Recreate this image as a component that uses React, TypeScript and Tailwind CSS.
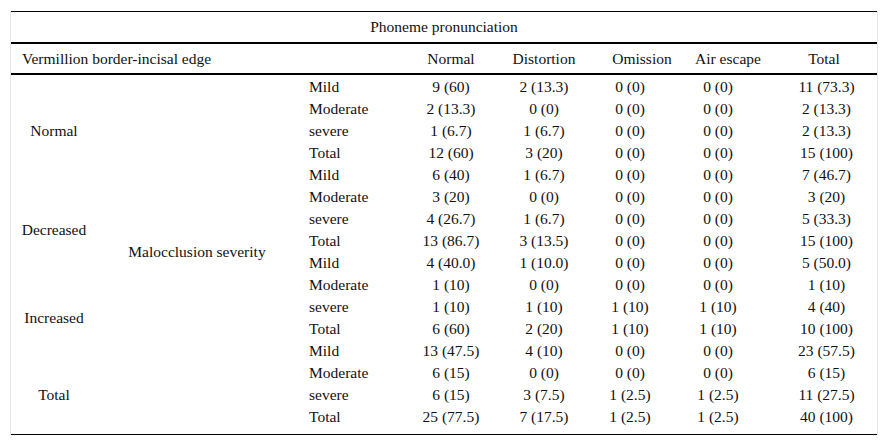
import React from 'react';

const rows: [string, string, string, string, string, string][] = [
  ['Mild', '9 (60)', '2 (13.3)', '0 (0)', '0 (0)', '11 (73.3)'],
  ['Moderate', '2 (13.3)', '0 (0)', '0 (0)', '0 (0)', '2 (13.3)'],
  ['severe', '1 (6.7)', '1 (6.7)', '0 (0)', '0 (0)', '2 (13.3)'],
  ['Total', '12 (60)', '3 (20)', '0 (0)', '0 (0)', '15 (100)'],
  ['Mild', '6 (40)', '1 (6.7)', '0 (0)', '0 (0)', '7 (46.7)'],
  ['Moderate', '3 (20)', '0 (0)', '0 (0)', '0 (0)', '3 (20)'],
  ['severe', '4 (26.7)', '1 (6.7)', '0 (0)', '0 (0)', '5 (33.3)'],
  ['Total', '13 (86.7)', '3 (13.5)', '0 (0)', '0 (0)', '15 (100)'],
  ['Mild', '4 (40.0)', '1 (10.0)', '0 (0)', '0 (0)', '5 (50.0)'],
  ['Moderate', '1 (10)', '0 (0)', '0 (0)', '0 (0)', '1 (10)'],
  ['severe', '1 (10)', '1 (10)', '1 (10)', '1 (10)', '4 (40)'],
  ['Total', '6 (60)', '2 (20)', '1 (10)', '1 (10)', '10 (100)'],
  ['Mild', '13 (47.5)', '4 (10)', '0 (0)', '0 (0)', '23 (57.5)'],
  ['Moderate', '6 (15)', '0 (0)', '0 (0)', '0 (0)', '6 (15)'],
  ['severe', '6 (15)', '3 (7.5)', '1 (2.5)', '1 (2.5)', '11 (27.5)'],
  ['Total', '25 (77.5)', '7 (17.5)', '1 (2.5)', '1 (2.5)', '40 (100)'],
];

export default function App() {
  return (
    <div className="w-[889px] h-[445px] bg-white text-[15.5px] text-[#111] font-[Liberation_Serif]">
      <div className="ml-[10px] pt-[11px] w-[868px]">
        <div className="border-x border-[#e6e6e6]">
          <div className="border-t border-black h-[31px] flex items-center justify-center">
            Phoneme pronunciation
          </div>
          <div className="border-t-2 border-black h-[31px] flex items-center">
            <div className="w-[389px] pl-[11px]">Vermillion border-incisal edge</div>
            <div className="w-[102px] text-center">Normal</div>
            <div className="w-[84px] text-center">Distortion</div>
            <div className="w-[94px] text-center pl-[18px]">Omission</div>
            <div className="w-[96px] text-center">Air escape</div>
            <div className="w-[101px] text-center pr-[5px]">Total</div>
          </div>
          <div className="border-t-2 border-black flex pt-px pb-[6px]">
            <div className="grid w-[286px] grid-cols-[86px_200px] grid-rows-[repeat(16,22px)]">
              <div className="col-start-1 row-start-3 flex items-center justify-center">Normal</div>
              <div className="col-start-1 row-start-7 row-span-2 flex items-center justify-center">Decreased</div>
              <div className="col-start-1 row-start-11 row-span-2 flex items-center justify-center">Increased</div>
              <div className="col-start-1 row-start-15 flex items-center justify-center">Total</div>
              <div className="col-start-2 row-start-1 row-span-16 flex items-center justify-center">
                Malocclusion severity
              </div>
            </div>
            <div className="flex-1">
              {rows.map((r, i) => (
                <div key={i} className="flex h-[22px] items-center">
                  <div className="w-[103px] pl-[12px]">{r[0]}</div>
                  <div className="w-[102px] text-center">{r[1]}</div>
                  <div className="w-[84px] text-center">{r[2]}</div>
                  <div className="w-[94px] text-center pr-[6px]">{r[3]}</div>
                  <div className="w-[96px] text-center pr-[20px]">{r[4]}</div>
                  <div className="w-[101px] text-center">{r[5]}</div>
                </div>
              ))}
            </div>
          </div>
          <div className="border-t border-black" />
        </div>
      </div>
    </div>
  );
}
